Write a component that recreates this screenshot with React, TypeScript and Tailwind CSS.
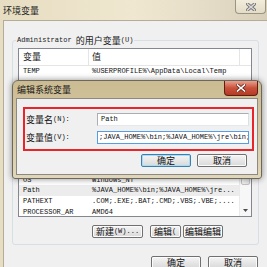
import clsx from "clsx";

const cjk = "font-['Noto_Sans_CJK_SC',sans-serif]";
const mono = "font-['Liberation_Mono','Noto_Sans_CJK_SC',monospace]";

function Btn({
  children,
  className,
  focus,
}: {
  children: React.ReactNode;
  className?: string;
  focus?: boolean;
}) {
  return (
    <div
      className={clsx(
        "flex h-[13px] shrink-0 items-center justify-center rounded-[2px] border bg-linear-to-b from-[#f5f5f5] to-[#d9d9d9] text-[9px] leading-none text-[#111]",
        cjk,
        focus
          ? "border-[#3c7fb1] shadow-[inset_0_0_0_1px_#a8dcf5]"
          : "border-[#707070] shadow-[inset_0_0_0_1px_#fbfbfb]",
        className,
      )}
    >
      {children}
    </div>
  );
}

function ListHeader({ scroll }: { scroll?: boolean }) {
  return (
    <div className="flex h-[17px] shrink-0 items-center border-b border-[#e5e5e5] bg-white text-[9px] text-[#222]">
      <div className={clsx(cjk, "flex h-full w-[70px] items-center border-r border-[#e5e5e5] pl-[4px]")}>变量</div>
      <div className={clsx(cjk, "flex h-full flex-1 items-center pl-[3px]", !scroll && "border-r border-[#e5e5e5]")}>值</div>
      {!scroll && <div className="w-[11px]" />}
    </div>
  );
}

function Row({ name, value, selected }: { name: string; value: string; selected?: boolean }) {
  return (
    <div
      className={clsx(
        mono,
        "flex h-[10.75px] shrink-0 items-center whitespace-nowrap text-[7px] text-[#111]",
        selected && "bg-[#ececec]",
      )}
    >
      <div className="w-[70px] overflow-hidden pl-[4px]">{name}</div>
      <div className="flex-1 overflow-hidden pl-[3px]">{value}</div>
    </div>
  );
}

function CloseX({ color, outline }: { color: string; outline: string }) {
  return (
    <svg width="10" height="8" viewBox="0 0 10 8">
      <path d="M1.5 1 L8.5 7 M8.5 1 L1.5 7" stroke={outline} strokeWidth="3.2" strokeLinecap="square" />
      <path d="M1.5 1 L8.5 7 M8.5 1 L1.5 7" stroke={color} strokeWidth="1.6" strokeLinecap="square" />
    </svg>
  );
}

const userVars = [["TEMP", "%USERPROFILE%\\AppData\\Local\\Temp"]];

const sysVars = [
  ["FP_NO_HOST_C", "NO"],
  ["NUMBER_OF_PR", "4"],
  ["OS", "Windows_NT"],
  ["Path", "%JAVA_HOME%\\bin;%JAVA_HOME%\\jre..."],
  ["PATHEXT", ".COM;.EXE;.BAT;.CMD;.VBS;.VBE;...."],
  ["PROCESSOR_AR", "AMD64"],
];

export default function App() {
  return (
    <div className="relative h-[267px] w-[267px] overflow-hidden bg-linear-to-r from-[#e6ddc2] via-[#efe7cf] to-[#f6f0de]">
      {/* outer window title bar */}
      <div className="flex h-[20px] bg-linear-to-r from-transparent via-transparent to-[#d8cfb8]">
        <div className={clsx(cjk, "self-center pl-[3px] text-[9px] leading-none text-[#1c1c1c]")}>环境变量</div>
        <div className="ml-auto mr-[1px] flex h-[14px] w-[31px] items-center justify-center rounded-b-[4px] border border-t-0 border-[#9a9484] bg-linear-to-b from-[#f2ecdc] to-[#e4dcc6]">
          <CloseX color="#d8d8d8" outline="#6e6e6e" />
        </div>
      </div>

      {/* outer window client area */}
      <div className="ml-[3px] h-[247px] border-l border-t border-[#b3ac97] bg-[#f0f0f0]">
        <fieldset className="ml-[8px] mt-[14px] w-[247px] rounded-[3px] border border-[#d5dfe5] pb-[6px] pl-[5px] pr-[6px] pt-[3px]">
          <legend className="-ml-[2px] flex h-[10px] items-center px-[1px] leading-none text-[#1a1a1a]">
            <span className={clsx(mono, "text-[7px]")}>Administrator&nbsp;</span>
            <span className={clsx(cjk, "text-[9px]")}>的用户变量</span>
            <span className={clsx(mono, "text-[7px]")}>(U)</span>
          </legend>
          <div className="flex h-[44px] flex-col overflow-hidden border border-[#828790] bg-white">
            <ListHeader />
            {userVars.map(([n, v]) => (
              <Row key={n} name={n} value={v} />
            ))}
          </div>
          <div className="mt-[8px] flex justify-end gap-[7px]">
            <Btn className="w-[51px]">新建(N)...</Btn>
            <Btn className="w-[51px]">编辑(E)...</Btn>
            <Btn className="w-[51px]">删除(D)</Btn>
          </div>
        </fieldset>

        <fieldset className="ml-[8px] mt-[2px] w-[247px] rounded-[3px] border border-[#d5dfe5] pb-[6px] pl-[5px] pr-[6px] pt-[3px]">
          <legend className="-ml-[2px] flex h-[10px] items-center px-[1px] leading-none text-[#1a1a1a]">
            <span className={clsx(cjk, "text-[9px]")}>系统变量</span>
            <span className={clsx(mono, "text-[7px]")}>(S)</span>
          </legend>
          <div className="flex h-[82px] overflow-hidden border border-[#828790] bg-white">
            <div className="flex flex-1 flex-col overflow-hidden">
              <ListHeader scroll />
              {sysVars.map(([n, v]) => (
                <Row key={n} name={n} value={v} selected={n === "Path"} />
              ))}
            </div>
            <div className="flex w-[12px] flex-col border-l border-[#eaeaea] bg-[#f7f7f7]">
              <div className="h-[12px]" />
              <div className="mx-[1px] mt-[2px] h-[35px] rounded-[2px] border border-[#c2c2c2] bg-linear-to-r from-[#f4f4f4] to-[#e2e2e2]" />
              <div className="flex-1" />
              <div className="flex h-[12px] items-center justify-center">
                <svg width="5" height="3" viewBox="0 0 5 3">
                  <path d="M0 0 H5 L2.5 3 Z" fill="#4d4d4d" />
                </svg>
              </div>
            </div>
          </div>
          <div className="mt-[8px] flex pl-[74px]">
            <Btn className="w-[51px]">
              新建<span className={clsx(mono, "text-[7px]")}>(W)...</span>
            </Btn>
            <Btn className="ml-[7px] w-[31px] justify-start pl-[3px]">
              编辑<span className={clsx(mono, "text-[7px]")}>(</span>
            </Btn>
            <Btn className="ml-[2px] w-[40px]">编辑编辑</Btn>
          </div>
        </fieldset>

        <div className="mt-[11px] flex justify-end gap-[7px] pr-[9px]">
          <Btn className="w-[50px]">确定</Btn>
          <Btn className="w-[50px]">取消</Btn>
        </div>
      </div>

      {/* edit dialog on top */}
      <div className="absolute left-[12px] top-[80px] flex h-[99px] w-[250px] flex-col rounded-t-[6px] rounded-b-[3px] border border-[#6d685a] bg-linear-to-b from-[#cbbb92] to-[#e0d6b9] shadow-[0_0_6px_rgba(0,0,0,0.45)]">
        <div className="flex h-[17px] shrink-0">
          <div className={clsx(cjk, "self-center pl-[4px] text-[9px] leading-none text-[#1a1a1a]")}>编辑系统变量</div>
          <div className="ml-auto mr-[3px] flex h-[15px] w-[34px] items-center justify-center rounded-b-[4px] border border-t-0 border-[#5e1e14] bg-linear-to-b from-[#e8a090] via-[#c9503a] to-[#b53a24]">
            <CloseX color="#ffffff" outline="#6a2a1c" />
          </div>
        </div>
        <div className="mx-[3px] h-[77px] border border-[#8c8a80] bg-[#f0f0f0] pl-[6px] pr-[10px] pt-[8px]">
          <div className="flex h-[44px] w-[231px] flex-col gap-[5px] border-2 border-[#e8252b] pb-[4px] pr-[3px] pt-[4px]">
            <div className="flex h-[13px] items-center">
              <div className="flex w-[72px] items-center pl-[1px] leading-none text-[#111]">
                <span className={clsx(cjk, "text-[9px]")}>变量名</span>
                <span className={clsx(mono, "text-[7px]")}>(N):</span>
              </div>
              <div className={clsx(mono, "flex h-full flex-1 items-center overflow-hidden whitespace-nowrap border border-[#abadb3] border-b-[#e3e9ef] border-r-[#dbdfe6] bg-white pl-[3px] text-[7px] text-[#111]")}>
                Path
              </div>
            </div>
            <div className="flex h-[13px] items-center">
              <div className="flex w-[72px] items-center pl-[1px] leading-none text-[#111]">
                <span className={clsx(cjk, "text-[9px]")}>变量值</span>
                <span className={clsx(mono, "text-[7px]")}>(V):</span>
              </div>
              <div className={clsx(mono, "flex h-full flex-1 items-center overflow-hidden whitespace-nowrap border border-[#569de5] bg-white pl-[1px] text-[7px] text-[#111]")}>
                {";JAVA_HOME%\\bin;%JAVA_HOME%\\jre\\bin;"}
              </div>
            </div>
          </div>
          <div className="mt-[3px] flex justify-end gap-[6px]">
            <Btn focus className="w-[50px]">确定</Btn>
            <Btn className="w-[50px]">取消</Btn>
          </div>
        </div>
      </div>
    </div>
  );
}
